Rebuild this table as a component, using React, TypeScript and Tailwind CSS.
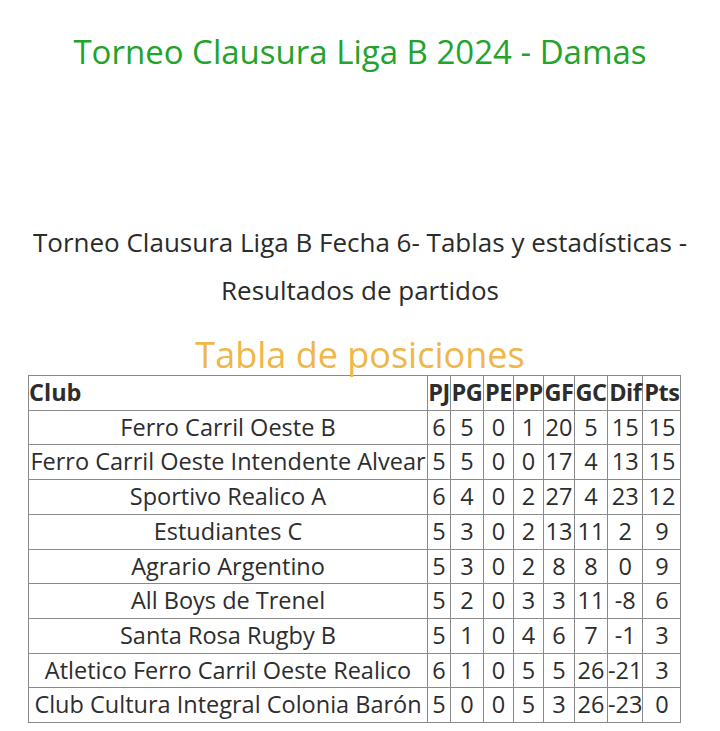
const rows: [string, number, number, number, number, number, number, number, number][] = [
  ["Ferro Carril Oeste B", 6, 5, 0, 1, 20, 5, 15, 15],
  ["Ferro Carril Oeste Intendente Alvear", 5, 5, 0, 0, 17, 4, 13, 15],
  ["Sportivo Realico A", 6, 4, 0, 2, 27, 4, 23, 12],
  ["Estudiantes C", 5, 3, 0, 2, 13, 11, 2, 9],
  ["Agrario Argentino", 5, 3, 0, 2, 8, 8, 0, 9],
  ["All Boys de Trenel", 5, 2, 0, 3, 3, 11, -8, 6],
  ["Santa Rosa Rugby B", 5, 1, 0, 4, 6, 7, -1, 3],
  ["Atletico Ferro Carril Oeste Realico", 6, 1, 0, 5, 5, 26, -21, 3],
  ["Club Cultura Integral Colonia Barón", 5, 0, 0, 5, 3, 26, -23, 0],
];

const headers = [
  { label: "PJ", w: "w-[23px]" },
  { label: "PG", w: "w-[33px]" },
  { label: "PE", w: "w-[30px]" },
  { label: "PP", w: "w-[30px]" },
  { label: "GF", w: "w-[31px]" },
  { label: "GC", w: "w-[33px]" },
  { label: "Dif", w: "w-[35px]" },
  { label: "Pts", w: "w-[38px]" },
];

export default function App() {
  return (
    <div className="w-[720px] h-[731px] bg-white overflow-hidden font-['Open_Sans',sans-serif] text-[#333]">
      <h1 className="pt-[31px] text-center text-[33px] leading-[42px] text-[#22a32a]">
        Torneo Clausura Liga B 2024 - Damas
      </h1>
      <p className="mt-[145px] text-center text-[26px] leading-[48px] text-[#2b2b2b]">
        Torneo Clausura Liga B Fecha 6- Tablas y estadísticas -
        <br />
        Resultados de partidos
      </p>
      <h2 className="mt-[21px] text-center text-[36px] leading-[40px] text-[#efb649]">
        Tabla de posiciones
      </h2>
      <table className="ml-[28px] border-collapse text-[23.5px] leading-[33.7px] text-[#2d2d2d]">
        <thead>
          <tr>
            <th className="w-[399px] border border-[#8a8a8a] p-0 text-left font-bold">Club</th>
            {headers.map((h) => (
              <th key={h.label} className={`${h.w} border border-[#8a8a8a] p-0 font-bold tracking-[-0.5px]`}>
                {h.label}
              </th>
            ))}
          </tr>
        </thead>
        <tbody>
          {rows.map(([club, ...nums]) => (
            <tr key={club}>
              <td className="border border-[#8a8a8a] p-0 text-center whitespace-nowrap">{club}</td>
              {nums.map((n, i) => (
                <td key={i} className="border border-[#8a8a8a] p-0 text-center whitespace-nowrap">
                  {n}
                </td>
              ))}
            </tr>
          ))}
        </tbody>
      </table>
    </div>
  );
}
